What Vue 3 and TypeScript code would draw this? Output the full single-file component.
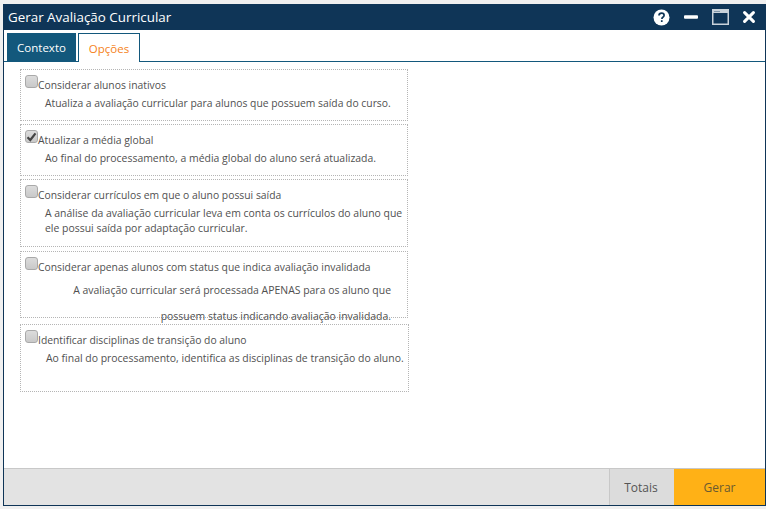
<script setup lang="ts">
interface Option {
  label: string
  desc: string[]
  checked: boolean
  kind: string
}
const options: Option[] = [
  { label: 'Considerar alunos inativos', desc: ['Atualiza a avaliação curricular para alunos que possuem saída do curso.'], checked: false, kind: 'k1' },
  { label: 'Atualizar a média global', desc: ['Ao final do processamento, a média global do aluno será atualizada.'], checked: true, kind: 'k2' },
  { label: 'Considerar currículos em que o aluno possui saída', desc: ['A análise da avaliação curricular leva em conta os currículos do aluno que', 'ele possui saída por adaptação curricular.'], checked: false, kind: 'k3' },
  { label: 'Considerar apenas alunos com status que indica avaliação invalidada', desc: ['A avaliação curricular será processada APENAS para os aluno que', 'possuem status indicando avaliação invalidada.'], checked: false, kind: 'k4' },
  { label: 'Identificar disciplinas de transição do aluno', desc: ['Ao final do processamento, identifica as disciplinas de transição do aluno.'], checked: false, kind: 'k5' },
]
</script>

<template>
  <div class="page">
    <div class="window">
      <header class="titlebar">
        <span class="title">Gerar Avaliação Curricular</span>
        <div class="controls">
          <svg width="17" height="17" viewBox="0 0 17 17" class="help">
            <circle cx="8.5" cy="8.5" r="8" fill="#fff" />
            <path d="M6 6.6c0-1.6 1.1-2.4 2.6-2.4s2.5.9 2.5 2.1c0 1-.6 1.5-1.3 2-.6.4-.9.8-.9 1.6" fill="none" stroke="#0f3557" stroke-width="1.7" />
            <rect x="7.9" y="11.2" width="1.7" height="1.8" fill="#0f3557" />
          </svg>
          <svg width="14" height="4" viewBox="0 0 14 4" class="min"><rect width="14" height="3.4" y="0.3" rx="1" fill="#fff" /></svg>
          <svg width="17" height="16" viewBox="0 0 17 16" class="max">
            <rect x="0.75" y="0.75" width="15.5" height="14.5" fill="none" stroke="#c9d2da" stroke-width="1.5" />
            <rect x="1" y="1" width="15" height="3" fill="#c9d2da" />
            <rect x="2" y="2" width="6" height="1" fill="#7f95a8" />
          </svg>
          <svg width="12" height="12" viewBox="0 0 12 12" class="close">
            <path d="M1.6 1.6l8.8 8.8M10.4 1.6l-8.8 8.8" stroke="#fff" stroke-width="3" stroke-linecap="round" />
          </svg>
        </div>
      </header>

      <nav class="tabs">
        <div class="tab tab-on">Contexto</div>
        <div class="tab tab-sel">Opções</div>
      </nav>

      <main class="content">
        <section v-for="o in options" :key="o.label" class="opt" :class="o.kind">
          <label class="row">
            <span class="check" :class="{ on: o.checked }">
              <svg v-if="o.checked" width="11" height="10" viewBox="0 0 11 10">
                <path d="M1.5 5.2l2.8 2.8 5.2-6.6" fill="none" stroke="#444" stroke-width="2.2" />
              </svg>
            </span>
            <span class="label">{{ o.label }}</span>
          </label>
          <p v-for="d in o.desc" :key="d" class="desc">{{ d }}</p>
        </section>
      </main>

      <footer class="footer">
        <button class="btn totais">Totais</button>
        <button class="btn gerar">Gerar</button>
      </footer>
    </div>
  </div>
</template>

<style>
html, body { margin: 0; background: #f0f0f0; }
</style>

<style scoped>
.page {
  width: 766px;
  height: 509px;
  padding: 4px 0 3px 3px;
  box-sizing: border-box;
  font-family: "Open Sans", "Noto Sans", sans-serif;
  overflow: hidden;
}
.window {
  height: 100%;
  box-sizing: border-box;
  display: flex;
  flex-direction: column;
  background: #fff;
  border-left: 1px solid #0f3557;
  border-right: 1px solid #0f3557;
  border-bottom: 1px solid #0f3557;
}
.titlebar {
  height: 26px;
  margin: 0 -1px;
  flex: none;
  background: #0f3557;
  color: #fff;
  display: flex;
  align-items: center;
  justify-content: space-between;
  padding: 0 11px 0 5px;
}
.title { font-size: 13.4px; white-space: nowrap; }
.controls { display: flex; align-items: center; }
.help { margin-right: 14px; }
.min { margin-right: 14px; }
.max { margin-right: 14px; }
.tabs {
  flex: none;
  height: 32px;
  box-sizing: border-box;
  border-bottom: 1px solid #13587c;
  display: flex;
  align-items: flex-end;
  padding-left: 3px;
  gap: 2px;
}
.tab {
  font-size: 11.5px;
  display: flex;
  align-items: center;
  justify-content: center;
  box-sizing: border-box;
  margin-bottom: -1px;
}
.tab-on {
  width: 69px;
  height: 28px;
  background: #13587c;
  color: #fff;
  margin-bottom: 0;
}
.tab-sel {
  width: 62px;
  height: 29px;
  background: #fff;
  color: #f58220;
  border: 1px solid #13587c;
  border-bottom: 0;
}
.content {
  flex: 1;
  padding: 7px 0 0 16px;
}
.opt {
  box-sizing: border-box;
  width: 388px;
  border: 1px dotted #b5b5b5;
  padding: 5px 4px 0 4px;
  color: #505050;
  font-size: 10.35px;
  white-space: nowrap;
}
.k1, .k2 { height: 52px; margin-bottom: 3px; }
.k3 { height: 68px; margin-bottom: 4px; }
.k4 { height: 67px; margin-bottom: 6px; }
.k5 { height: 68px; width: 389px; }
.row { display: flex; align-items: flex-start; height: 18px; }
.check {
  width: 11px;
  height: 11px;
  flex: none;
  border: 1px solid #a9a9a9;
  border-radius: 3px;
  background: linear-gradient(#dcdcdc, #c9c9c9);
  display: flex;
  align-items: center;
  justify-content: center;
}
.label { line-height: 18px; margin-top: 1px; }
.desc { margin: 0 0 0 20px; line-height: 15px; padding-top: 3px; font-size: 10.45px; }
.k1 .desc { font-size: 10.35px; }
.k3 .desc + .desc { padding-top: 0; }
.k4 .desc {
  text-align: right;
  margin: 0;
  line-height: 26px;
  padding: 0 12px 0 0;
}
.k4 .desc:first-of-type { padding-top: 2px; }
.k5 .desc { margin-left: 21px; }
.footer {
  flex: none;
  height: 37px;
  box-sizing: border-box;
  background: #e3e3e3;
  border-top: 1px solid #c8c8c8;
  display: flex;
  justify-content: flex-end;
}
.btn {
  border: 0;
  padding: 0;
  font-family: inherit;
  font-size: 12px;
  color: #555;
}
.totais {
  width: 65px;
  padding-right: 2px;
  background: #dcdcdc;
  border-left: 1px solid #c8c8c8;
}
.gerar {
  width: 91px;
  background: #ffb116;
  color: #6a5a30;
}
</style>
